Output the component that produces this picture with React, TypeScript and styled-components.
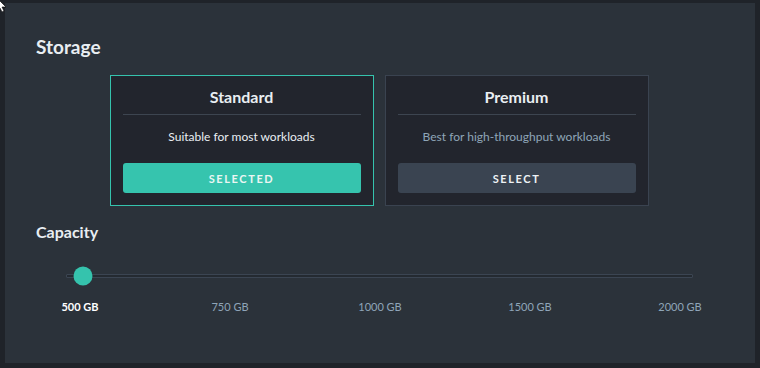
import styled, { createGlobalStyle } from 'styled-components';
import { useState } from 'react';

const GlobalStyle = createGlobalStyle`
    html, body {
        margin: 0;
        padding: 0;
        background: #1f2329;
        font-family: Lato, "Noto Sans", sans-serif;
    }
    * { box-sizing: border-box; }
`

const tiers = [
    { name: 'Standard', desc: 'Suitable for most workloads' },
    { name: 'Premium', desc: 'Best for high-throughput workloads' },
];

const sizes = ['500 GB', '750 GB', '1000 GB', '1500 GB', '2000 GB'];

function App() {
    const [tier, setTier] = useState('Standard');
    const [size, setSize] = useState(0);

    return (
        <>
        <GlobalStyle />
        <Page>
            <Pointer width="8" height="12" viewBox="0 0 8 12">
                <path d="M-3 -2 L6 7 L2 7 L4 11 L2 12 L0 8 L-3 11 Z" fill="#ffffff" stroke="#000" strokeWidth="0.6" />
            </Pointer>
            <Panel>
                <Heading>Storage</Heading>
                <Cards>
                    {tiers.map(t => (
                        <Card key={t.name} active={t.name === tier}>
                            <CardTitle>{t.name}</CardTitle>
                            <CardDesc active={t.name === tier}>{t.desc}</CardDesc>
                            <TierButton active={t.name === tier} onClick={() => setTier(t.name)}>
                                {t.name === tier ? 'Selected' : 'Select'}
                            </TierButton>
                        </Card>
                    ))}
                </Cards>

                <SubHeading>Capacity</SubHeading>
                <Track>
                    <Thumb style={{ left: `${(size / (sizes.length - 1)) * 100}%` }} />
                </Track>
                <Labels>
                    {sizes.map((s, i) => (
                        <Label key={s} active={i === size} onClick={() => setSize(i)}>{s}</Label>
                    ))}
                </Labels>
            </Panel>
        </Page>
        </>
    )
}

export default App

const Page = styled.div`
    position: relative;
    width: 760px;
    height: 368px;
    padding: 3px 5px 5px 5px;
    background: #1f2329;
`

const Pointer = styled.svg`
    position: absolute;
    top: 0;
    left: 0;
    z-index: 5;
`

const Panel = styled.section`
    width: 750px;
    height: 360px;
    background: #2b323a;
    padding: 33px 31px 0 31px;
    color: #e9eef2;
`

const Heading = styled.h2`
    margin: 0;
    font-size: 19px;
    font-weight: 700;
    line-height: 22px;
`

const Cards = styled.div`
    display: flex;
    justify-content: center;
    gap: 11px;
    margin-top: 17px;
    padding-right: 2px;
`

const Card = styled.div<{ active?: boolean }>`
    width: 264px;
    height: 131px;
    background: #22252d;
    border: 1px solid ${p => p.active ? '#35c3ad' : '#3a4350'};
    padding: 10px 12px 0 12px;
    display: flex;
    flex-direction: column;
    align-items: stretch;
`

const CardTitle = styled.div`
    font-size: 16px;
    font-weight: 700;
    text-align: center;
    line-height: 22px;
    padding-bottom: 6px;
    border-bottom: 1px solid #3d4550;
`

const CardDesc = styled.div<{ active?: boolean }>`
    font-size: 12px;
    line-height: 16px;
    text-align: center;
    margin-top: 14px;
    color: ${p => p.active ? '#e9eef2' : '#8fa5b8'};
`

const TierButton = styled.button<{ active?: boolean }>`
    margin-top: 18px;
    height: 30px;
    border: none;
    border-radius: 3px;
    background: ${p => p.active ? '#36c4ae' : '#3a4451'};
    color: ${p => p.active ? '#eaf6f3' : '#eef2f5'};
    font-family: Lato, "Noto Sans", sans-serif;
    font-size: 11px;
    font-weight: 700;
    letter-spacing: 1.6px;
    text-transform: uppercase;
    cursor: pointer;
`

const SubHeading = styled.h3`
    margin: 15px 0 0 0;
    font-size: 16px;
    font-weight: 700;
    line-height: 22px;
`

const Track = styled.div`
    position: relative;
    margin: 31px 31px 0 30px;
    height: 4px;
    background: #242a31;
    border: 1px solid #3b4552;
    border-radius: 1px;
`

const Thumb = styled.span`
    position: absolute;
    top: 50%;
    margin-left: 16px;
    width: 19px;
    height: 19px;
    border-radius: 50%;
    background: #35c3ad;
    transform: translate(-50%, -50%);
`

const Labels = styled.div`
    display: grid;
    grid-template-columns: repeat(5, 1fr);
    margin: 22px -31px 0 -31px;
`

const Label = styled.span<{ active?: boolean }>`
    text-align: center;
    font-size: 11px;
    line-height: 14px;
    font-weight: ${p => p.active ? 700 : 400};
    color: ${p => p.active ? '#ffffff' : '#8fa5b8'};
    cursor: pointer;
`
